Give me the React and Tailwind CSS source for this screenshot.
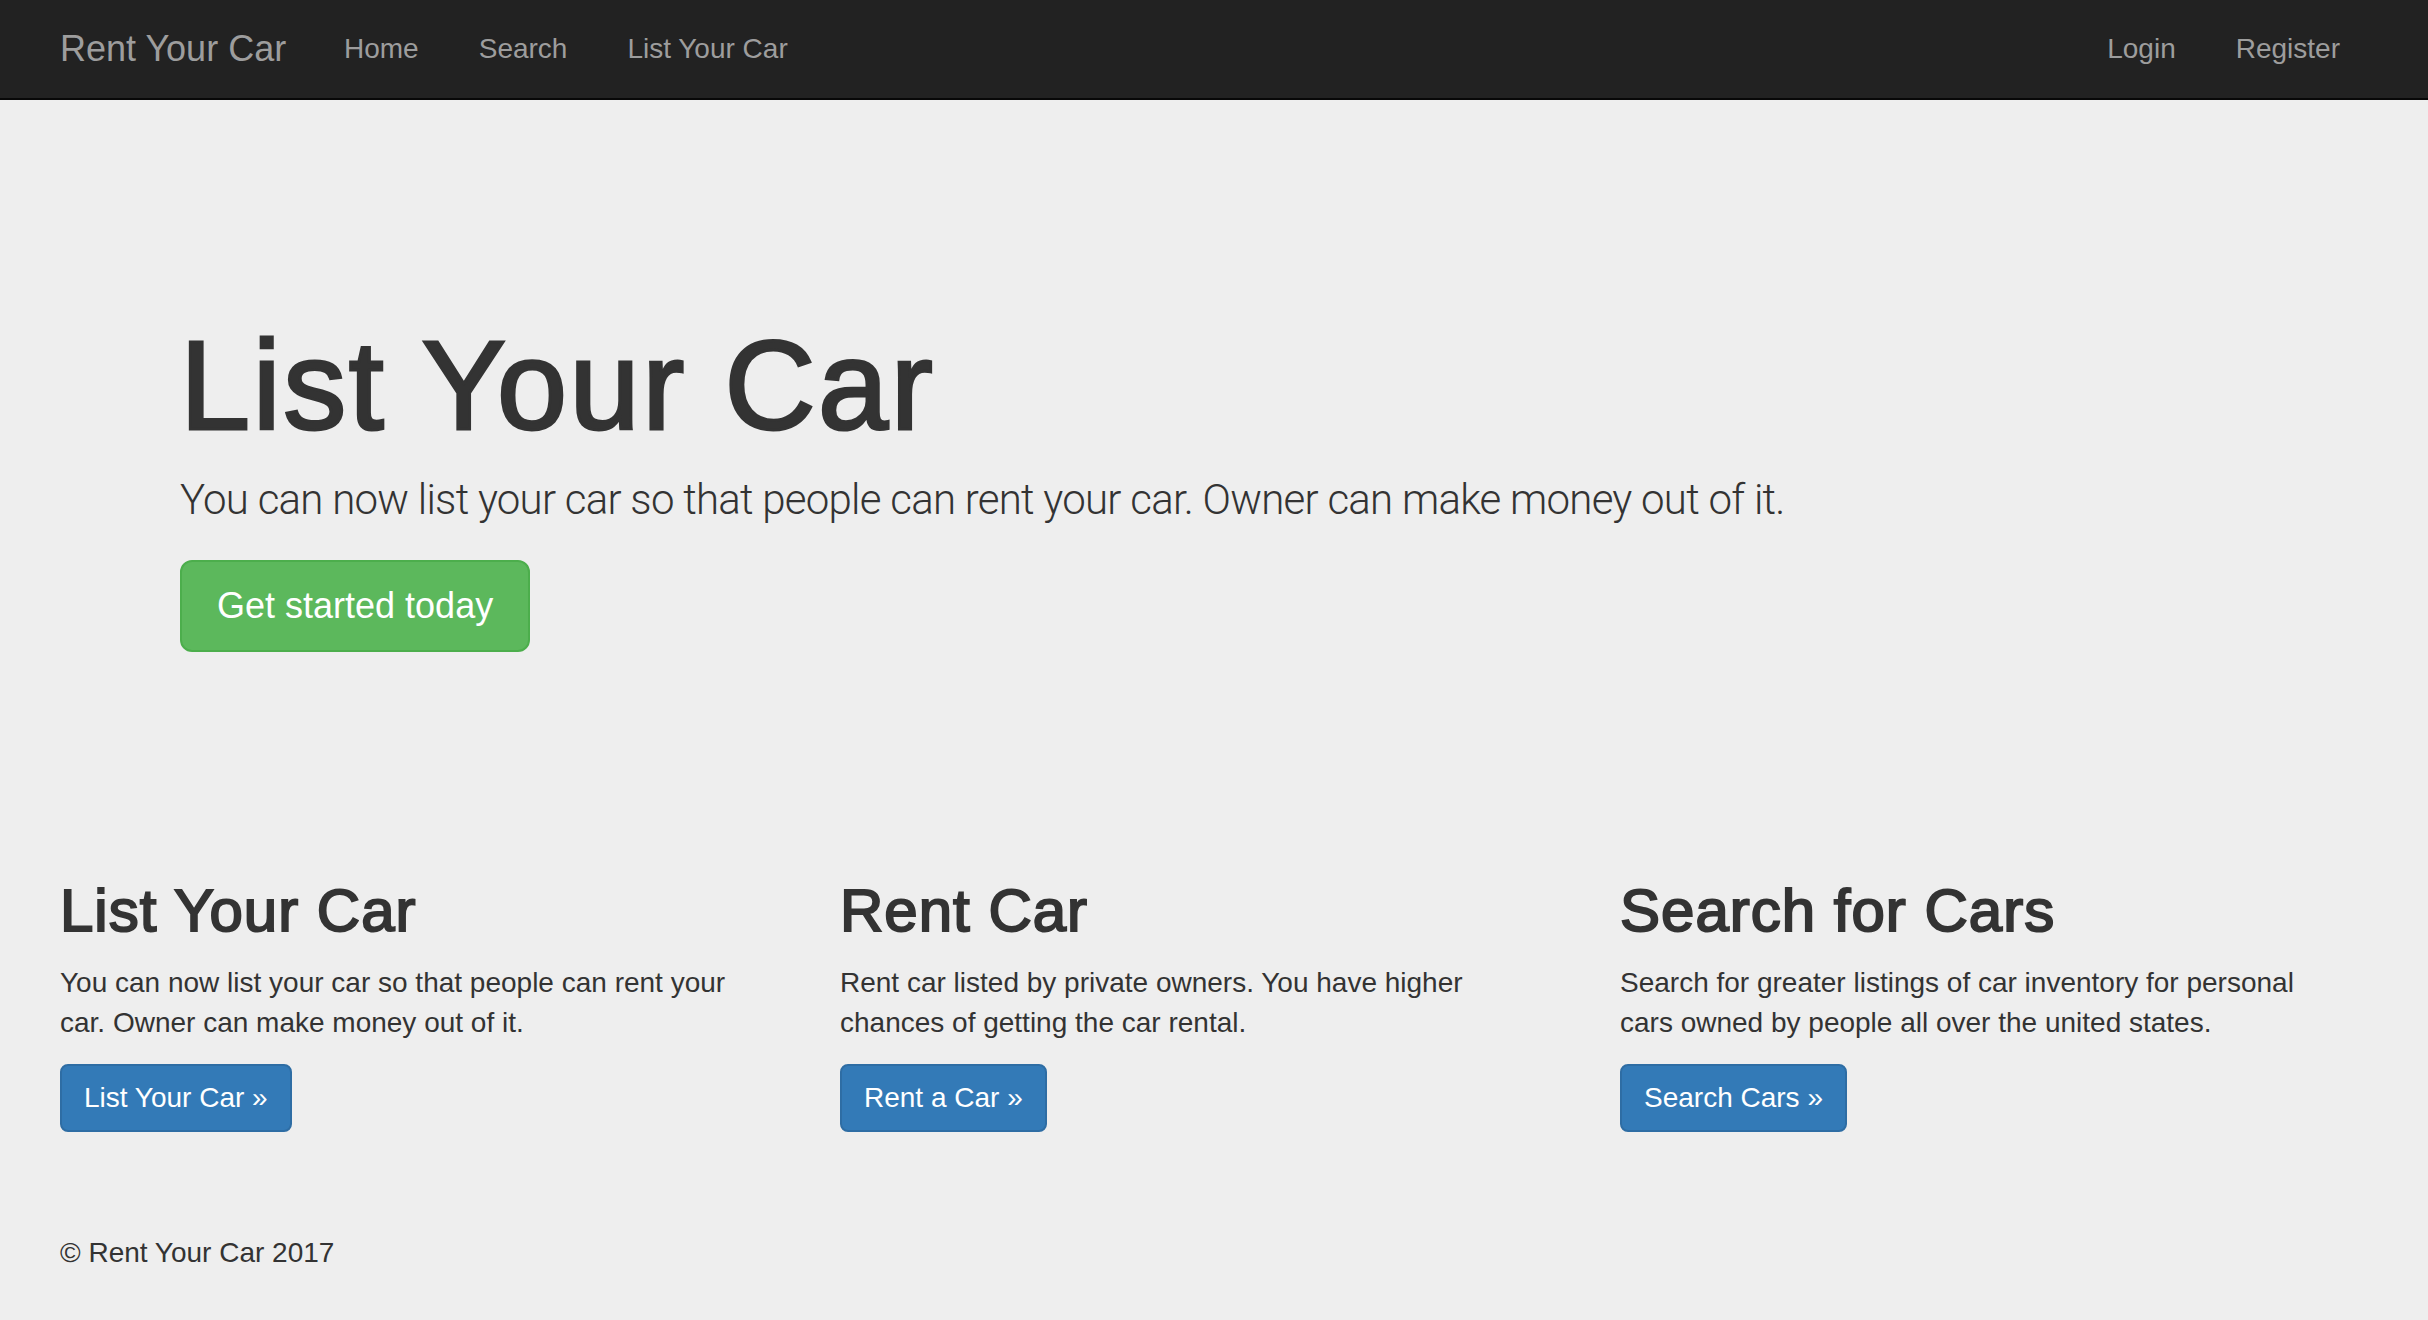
import React from "react";

const sans = { fontFamily: '"Liberation Sans", Arial, Helvetica, sans-serif' };

function Feature({ title, text, cta }) {
  return (
    <div className="flex flex-col items-start">
      <h2 className="text-[60px] leading-[66px] tracking-[1px] text-[#333333] [-webkit-text-stroke:2px_#333333]">
        {title}
      </h2>
      <p className="mt-[19px] max-w-[700px] text-[28px] leading-[40px] text-[#333333]">{text}</p>
      <a
        href="#"
        className="mt-[21px] inline-block rounded-[8px] border-2 border-[#2e6da4] bg-[#337ab7] px-[22px] py-[12px] text-[28px] leading-[40px] text-white"
      >
        {cta}
      </a>
    </div>
  );
}

export default function App() {
  return (
    <div className="min-h-screen bg-[#eeeeee] text-[#333333]" style={sans}>
      <nav className="flex h-[100px] items-center justify-between border-b-2 border-[#080808] bg-[#222222] pl-[60px] pr-[58px]">
        <div className="flex items-center">
          <a href="#" className="w-[254px] text-[36px] leading-[40px] text-[#9d9d9d]">
            Rent Your Car
          </a>
          <ul className="flex items-center">
            {["Home", "Search", "List Your Car"].map((l) => (
              <li key={l}>
                <a href="#" className="block px-[30px] text-[28px] leading-[40px] text-[#9d9d9d]">
                  {l}
                </a>
              </li>
            ))}
          </ul>
        </div>
        <ul className="flex items-center">
          {["Login", "Register"].map((l) => (
            <li key={l}>
              <a href="#" className="block px-[30px] text-[28px] leading-[40px] text-[#9d9d9d]">
                {l}
              </a>
            </li>
          ))}
        </ul>
      </nav>

      <section className="pl-[180px] pt-[217px]">
        <h1 className="text-[126px] leading-[138px] tracking-[2.6px] text-[#333333] [-webkit-text-stroke:3px_#333333]">
          List Your Car
        </h1>
        <p
          className="mt-[15px] text-[42px] leading-[60px] font-light tracking-[-0.75px] text-[#333333]"
          style={{ fontFamily: 'Roboto, "Liberation Sans", sans-serif' }}
        >
          You can now list your car so that people can rent your car. Owner can make money out of it.
        </p>
        <a
          href="#"
          className="mt-[30px] inline-block rounded-[12px] border-2 border-[#4cae4c] bg-[#5cb85c] px-[35px] py-[20px] text-[36px] leading-[48px] text-white"
        >
          Get started today
        </a>
      </section>

      <section className="mt-[226px] grid grid-cols-[720px_720px_720px] gap-x-[60px] pl-[60px]">
        <Feature
          title="List Your Car"
          text="You can now list your car so that people can rent your car. Owner can make money out of it."
          cta="List Your Car »"
        />
        <Feature
          title="Rent Car"
          text="Rent car listed by private owners. You have higher chances of getting the car rental."
          cta="Rent a Car »"
        />
        <Feature
          title="Search for Cars"
          text="Search for greater listings of car inventory for personal cars owned by people all over the united states."
          cta="Search Cars »"
        />
      </section>

      <footer className="mt-[101px] pb-[47px] pl-[60px]">
        <p className="text-[28px] leading-[40px] text-[#333333]">© Rent Your Car 2017</p>
      </footer>
    </div>
  );
}
